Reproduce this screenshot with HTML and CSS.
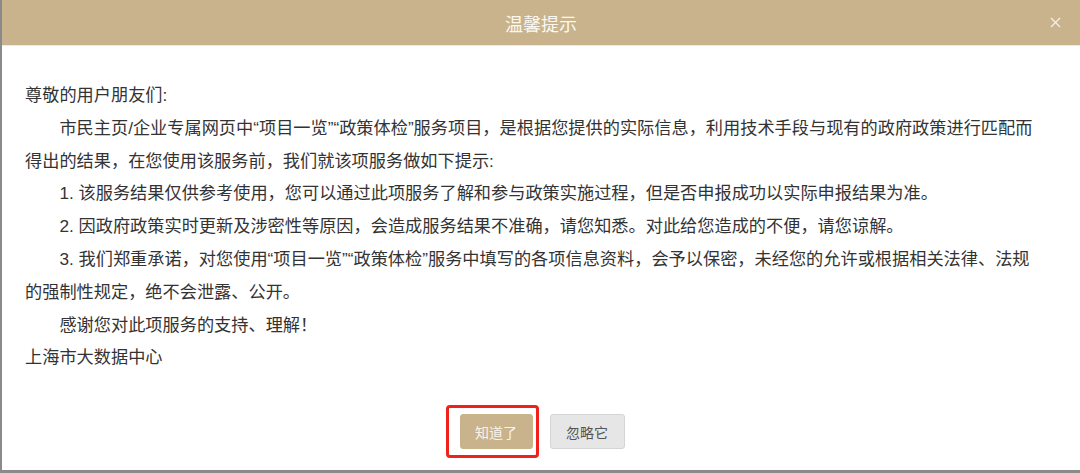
FILE: index.html
```html
<!DOCTYPE html>
<html lang="zh-CN">
<head>
    <meta charset="UTF-8">
    <meta name="viewport" content="width=device-width, initial-scale=1.0">
    <title>温馨提示</title>
    <link rel="stylesheet" href="styles.css">
</head>
<body>
    <div class="dialog">
        <div class="dialog-header">
            <h2>温馨提示</h2>
            <span class="close-btn">
                <svg width="11" height="11" viewBox="0 0 11 11">
                    <path d="M1 1L10 10M10 1L1 10" stroke="#f4efe6" stroke-width="1.4" fill="none"/>
                </svg>
            </span>
        </div>

        <div class="dialog-body">
            <p>尊敬的用户朋友们:</p>
            <p class="indent">市民主页/企业专属网页中“项目一览”“政策体检”服务项目，是根据您提供的实际信息，利用技术手段与现有的政府政策进行匹配而得出的结果，在您使用该服务前，我们就该项服务做如下提示:</p>
            <p class="indent">1. 该服务结果仅供参考使用，您可以通过此项服务了解和参与政策实施过程，但是否申报成功以实际申报结果为准。</p>
            <p class="indent">2. 因政府政策实时更新及涉密性等原因，会造成服务结果不准确，请您知悉。对此给您造成的不便，请您谅解。</p>
            <p class="indent">3. 我们郑重承诺，对您使用“项目一览”“政策体检”服务中填写的各项信息资料，会予以保密，未经您的允许或根据相关法律、法规的强制性规定，绝不会泄露、公开。</p>
            <p class="indent">感谢您对此项服务的支持、理解！</p>
            <p>上海市大数据中心</p>
        </div>

        <div class="dialog-footer">
            <span class="highlight">
                <button class="btn btn-ok">知道了</button>
            </span>
            <button class="btn btn-ignore">忽略它</button>
        </div>
    </div>
</body>
</html>
```

FILE: styles.css
```css
html, body {
    margin: 0;
    padding: 0;
    height: 100%;
}
body {
    font-family: "Liberation Sans", "Noto Sans CJK SC", sans-serif;
    background-color: #fff;
    overflow: hidden;
}
.dialog {
    height: 473px;
    box-sizing: border-box;
    border-left: 2px solid #8a8a8a;
    border-bottom: 3px solid #8a8a8a;
    display: flex;
    flex-direction: column;
}
.dialog-header {
    height: 45px;
    background-color: #c8b38c;
    border-bottom: 1px solid #efe8dc;
    display: flex;
    align-items: center;
    justify-content: center;
    position: relative;
}
.dialog-header h2 {
    margin: 0;
    font-size: 18px;
    font-weight: normal;
    color: #fbf8f2;
}
.close-btn {
    position: absolute;
    right: 19px;
    top: 17px;
    display: flex;
}
.dialog-body {
    padding: 33px 40px 0 23px;
    color: #333;
    font-size: 17.2px;
    line-height: 32.8px;
    flex: 1;
}
.dialog-body p {
    margin: 0;
}
.dialog-body .indent {
    text-indent: 2em;
}
.dialog-footer {
    display: flex;
    justify-content: center;
    align-items: center;
    gap: 17px;
    padding-bottom: 21px;
    padding-left: 2px;
}
.btn {
    height: 35px;
    padding: 0;
    border-radius: 3px;
    font-family: "Liberation Sans", "Noto Sans CJK SC", sans-serif;
    font-size: 14px;
    white-space: nowrap;
    cursor: pointer;
}
.btn-ok {
    background-color: #c8b38c;
    border: 1px solid #c8b38c;
    color: #f8f3ea;
    width: 73px;
}
.btn-ignore {
    background-color: #e6e6e6;
    border: 1px solid #d4d4d4;
    color: #555;
    width: 75px;
}
.highlight {
    position: relative;
    display: flex;
}
.highlight::after {
    content: "";
    position: absolute;
    left: -14px;
    right: -6px;
    top: -9px;
    bottom: -9px;
    border: 3.5px solid #f0201b;
    border-radius: 4px;
}
```
